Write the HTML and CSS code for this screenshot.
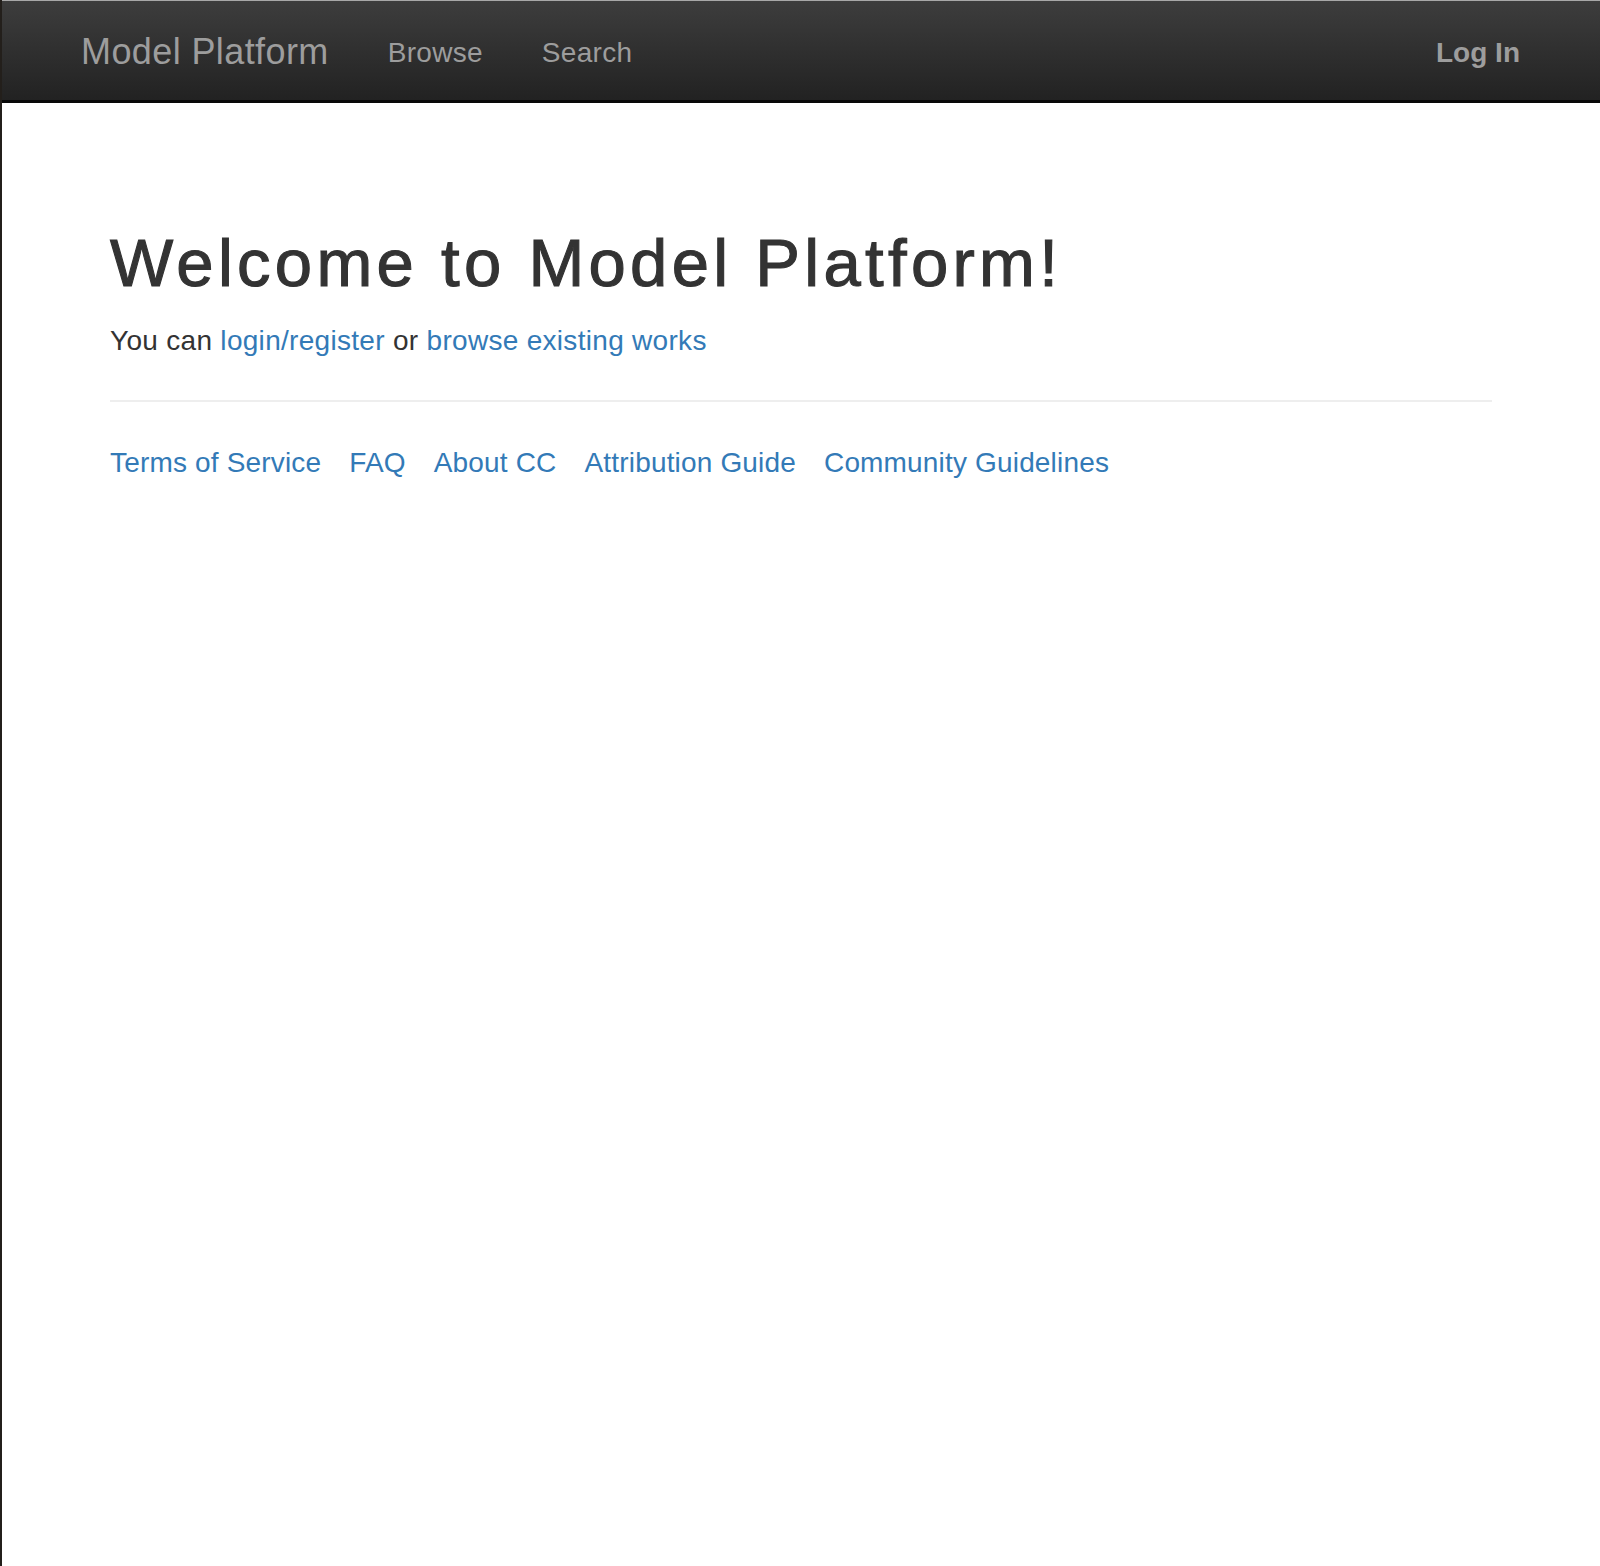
FILE: index.html
```html
<!DOCTYPE html>
<html lang="en">
<head>
<meta charset="utf-8">
<title>Model Platform</title>
<link rel="stylesheet" href="styles.css">
</head>
<body>
<div class="frame">
  <header class="navbar">
    <a class="brand" href="#">Model Platform</a>
    <nav class="nav-links">
      <a href="#">Browse</a>
      <a href="#">Search</a>
    </nav>
    <a class="login" href="#">Log In</a>
  </header>
  <main class="content">
    <h1 class="title">Welcome to Model Platform!</h1>
    <p class="lead">You can <a href="#">login/register</a> or <a href="#">browse existing works</a></p>
    <hr class="divider">
    <footer class="footer-links">
      <a href="#">Terms of Service</a>
      <a href="#">FAQ</a>
      <a href="#">About CC</a>
      <a href="#">Attribution Guide</a>
      <a href="#">Community Guidelines</a>
    </footer>
  </main>
</div>
</body>
</html>
```
FILE: styles.css
```css
html, body {
  margin: 0;
  padding: 0;
  background: #ffffff;
}
body {
  font-family: "Liberation Sans", Arial, Helvetica, sans-serif;
  color: #333333;
}
a {
  text-decoration: none;
}
.frame {
  min-height: 1566px;
  box-sizing: border-box;
  border-left: 2px solid #231f1b;
}
.navbar {
  display: flex;
  align-items: flex-start;
  box-sizing: border-box;
  height: 103px;
  padding: 0 80px 0 79px;
  border-top: 1px solid #a8a8a8;
  border-bottom: 3px solid #080808;
  background: linear-gradient(#3d3d3d, #222222);
}
.brand {
  font-size: 36px;
  line-height: 97px;
  padding-top: 2px;
  letter-spacing: 0.4px;
  color: #9d9d9d;
  margin-right: 59px;
}
.nav-links {
  display: flex;
  gap: 59px;
}
.nav-links a,
.login {
  font-size: 28px;
  line-height: 94px;
  padding-top: 5px;
  letter-spacing: 0.3px;
  color: #9d9d9d;
}
.login {
  margin-left: auto;
  font-weight: bold;
  letter-spacing: 0;
}
.content {
  padding: 0 108px;
}
.title {
  margin: 0;
  padding-top: 124px;
  font-size: 67px;
  line-height: 72px;
  font-weight: normal;
  letter-spacing: 4.3px;
  -webkit-text-stroke: 1.1px #333333;
  color: #333333;
}
.lead {
  margin: 22px 0 0;
  font-size: 28px;
  line-height: 40px;
  letter-spacing: 0.3px;
  color: #333333;
}
.lead a,
.footer-links a {
  color: #337ab7;
}
.divider {
  margin: 39px 0 0;
  border: 0;
  border-top: 2px solid #eeeeee;
  height: 0;
}
.footer-links {
  display: flex;
  gap: 28px;
  margin-top: 41px;
  font-size: 28px;
  line-height: 40px;
  letter-spacing: 0.17px;
}
```
